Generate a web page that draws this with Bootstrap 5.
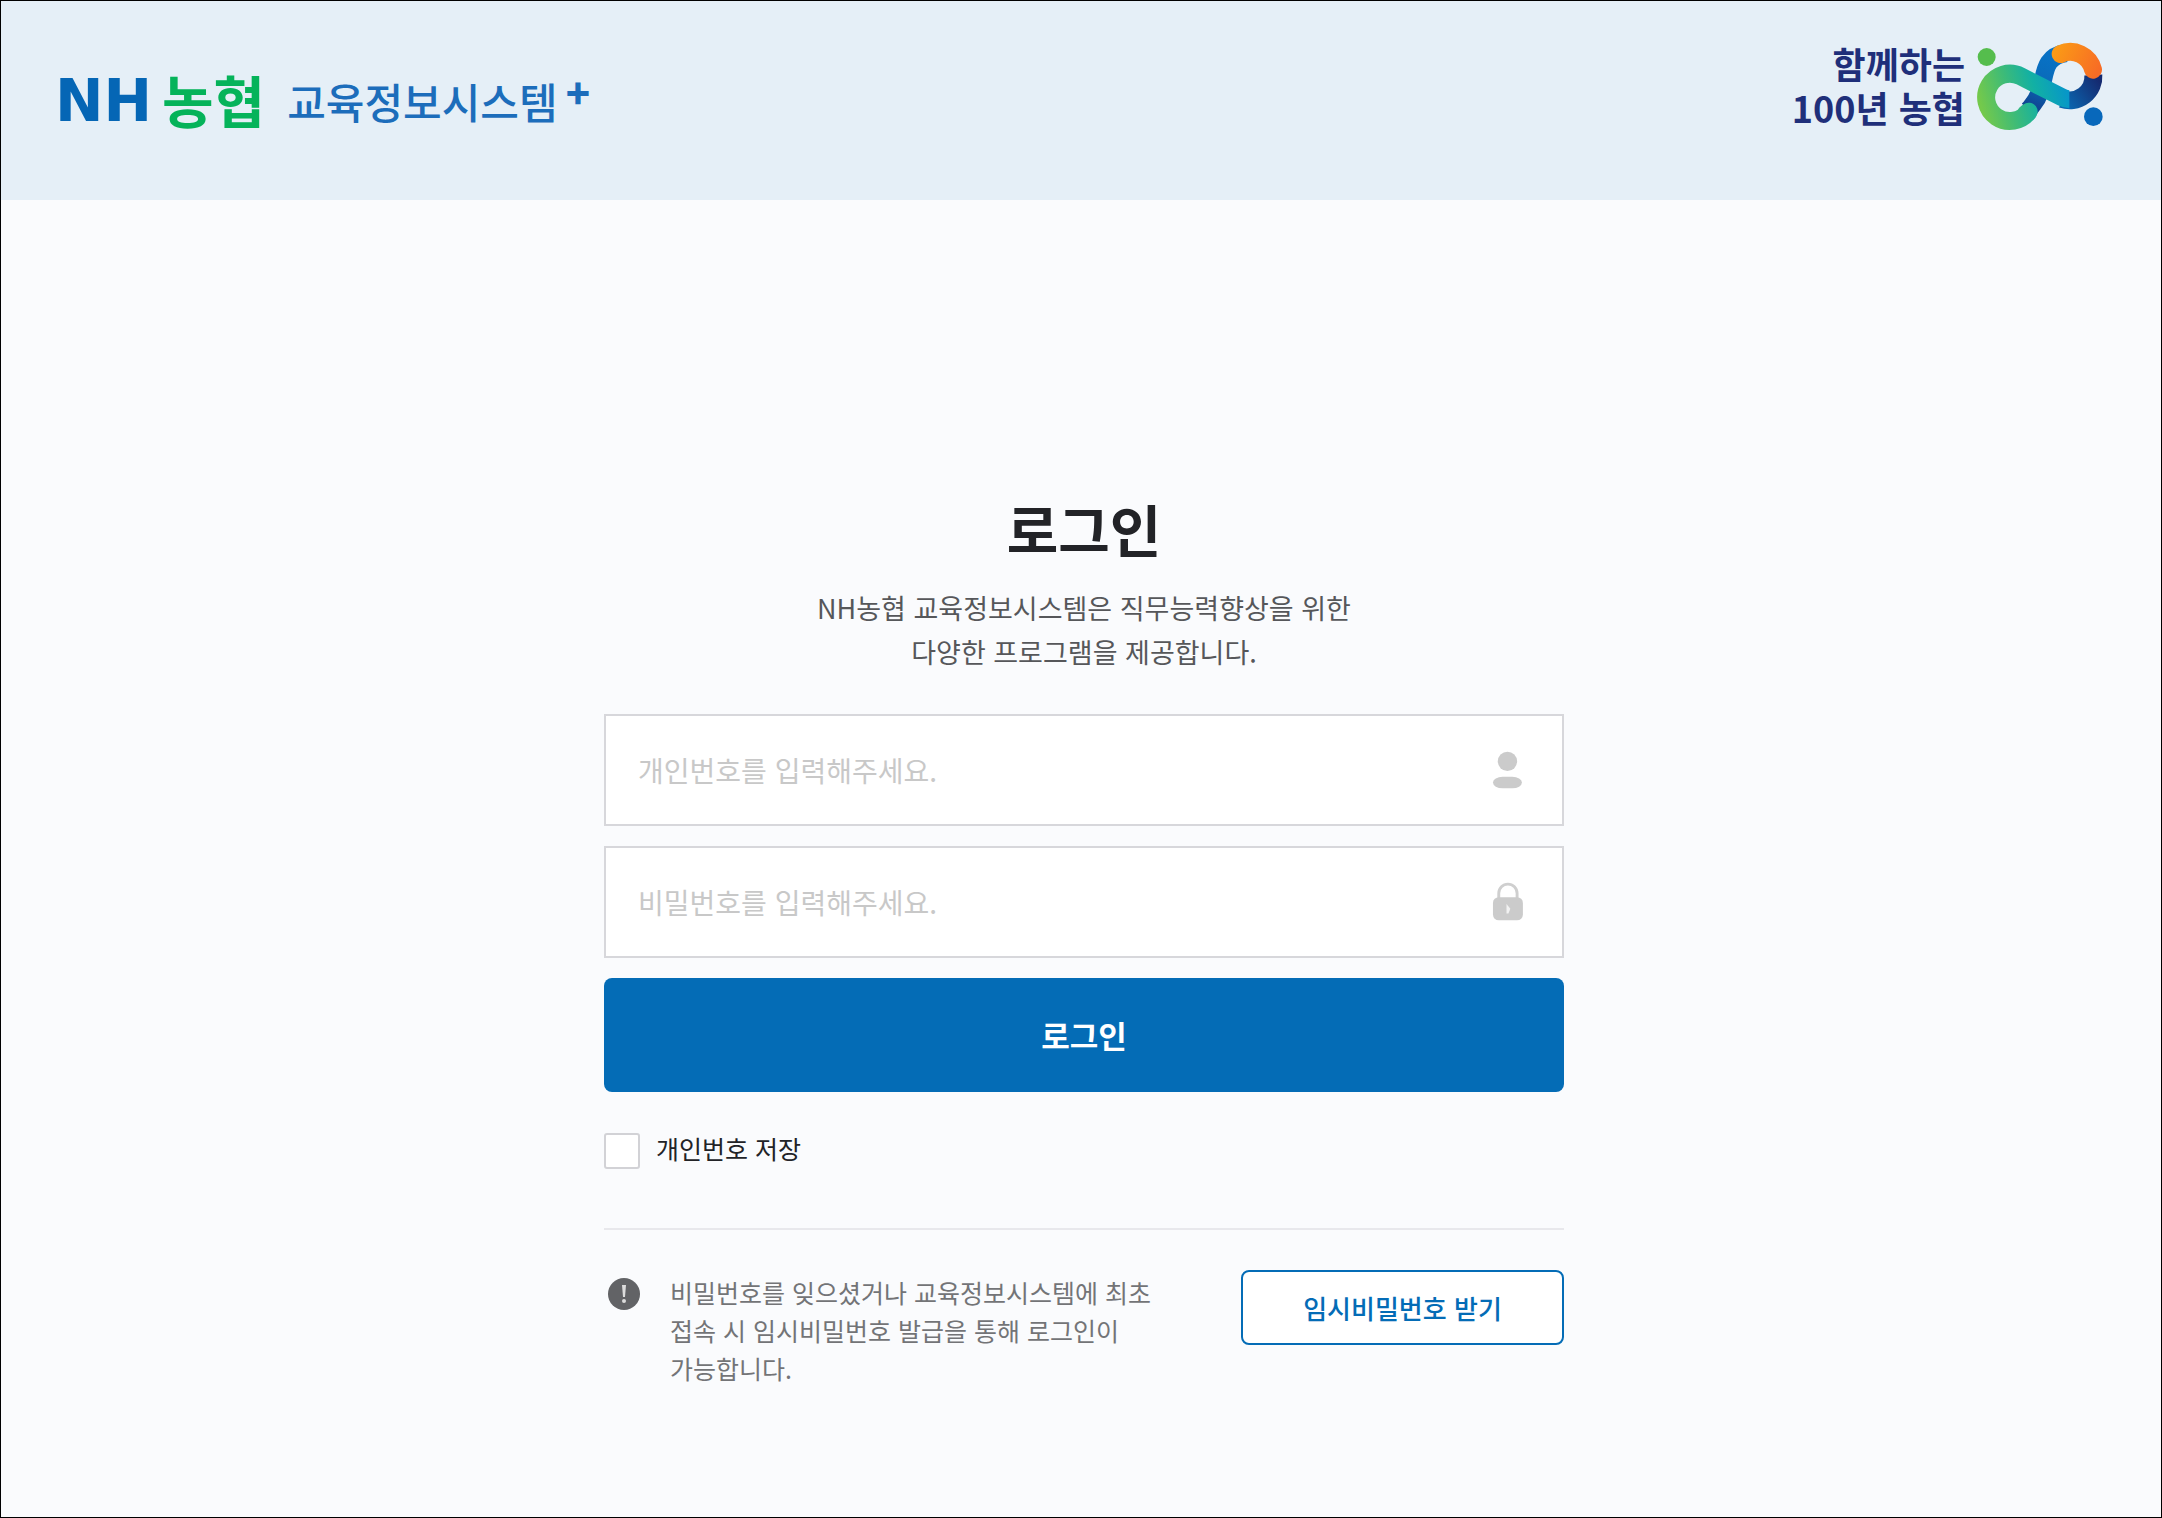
<!DOCTYPE html>
<html lang="ko">
<head>
<meta charset="utf-8">
<meta name="viewport" content="width=device-width, initial-scale=1">
<title>NH농협 교육정보시스템</title>
<link href="https://cdn.jsdelivr.net/npm/bootstrap@5.3.0/dist/css/bootstrap.min.css" rel="stylesheet">
<style>
body { font-family: "Noto Sans CJK KR", sans-serif; background: #fafbfd; color: #222327; border: 1px solid #000; }
.site-head { background: #e5eff7; height: 199px; padding: 40px 56px 0 54px; }
.brand { color: #1c6dbb; height: 120px; line-height: 120px; }
.brand-nh { font: bold 58px/120px "DejaVu Sans", sans-serif; color: #0566b5; }
.brand-coop { font-size: 56px; font-weight: 700; line-height: 116px; color: #05b35a; margin: 0 22px 0 10px; }
.brand-name { font-size: 42px; font-weight: 500; }
.brand-plus { font-size: 40px; font-weight: 900; line-height: 102px; margin-left: 8px; }
.slogan-row { gap: 10px; }
.slogan { font-size: 36px; font-weight: 700; line-height: 44px; color: #1f2f7a; }
.symbol { width: 130px; height: 90px; }
.login-main { padding: 288px 0 80px 6px; }
.login-box { max-width: 960px; }
.login-title { font-size: 56px; font-weight: 700; line-height: 80px; margin-bottom: 18px; }
.login-desc { font-size: 27px; line-height: 44px; color: #56575a; }
.field-stack { gap: 20px; }
.field { height: 112px; background: #fff; border: 2px solid #d7d7db; padding: 0 39px 0 32px; }
.field:focus-within { border-color: #046cb6; }
.field input { font-size: 28px; line-height: 48px; height: 56px; padding: 0; }
.field input::placeholder { color: #c8c8c8; }
.field svg { width: 32px; height: 44px; }
.btn-login { --bs-btn-bg: #046cb6; --bs-btn-hover-bg: #035c9b; --bs-btn-color: #fff; --bs-btn-hover-color: #fff; height: 114px; font-size: 31px; font-weight: 700; border: 0; border-radius: 8px; }
.save-row { padding: 41px 0 59px; line-height: 30px; font-size: 25px; }
.save-row .form-check-input { width: 36px; height: 36px; border: 2px solid #d2d2d6; border-radius: 3px; }
.help-row { border-top: 2px solid #e8e8ec; padding-top: 40px; }
.help-icon { width: 40px; height: 48px; }
.help-text { font-size: 25px; line-height: 38px; color: #737477; max-width: 500px; margin: 3px 0 0 26px; word-break: keep-all; }
.btn-temp { --bs-btn-color: #046cb6; --bs-btn-bg: #fff; --bs-btn-border-color: #046cb6; --bs-btn-hover-color: #fff; --bs-btn-hover-bg: #046cb6; width: 323px; height: 75px; border-width: 2px; border-radius: 8px; font-size: 26px; font-weight: 500; }
</style>
</head>
<body class="min-vh-100">
<header class="site-head d-flex justify-content-between align-items-start">
  <a href="#" class="brand d-flex text-decoration-none">
    <span class="brand-nh">NH</span><span class="brand-coop">농협</span><span class="brand-name">교육정보시스템</span><span class="brand-plus">+</span>
  </a>
  <div class="slogan-row d-flex">
    <div class="slogan text-end">함께하는<br>100년 농협</div>
    <svg class="symbol" viewBox="705 120 390 270" role="img" aria-label="100년 농협">
      <defs>
        <linearGradient id="ga" gradientUnits="userSpaceOnUse" x1="730" y1="340" x2="980" y2="270">
          <stop offset="0" stop-color="#74c94b"/><stop offset=".35" stop-color="#3dbb78"/><stop offset=".65" stop-color="#12b0a4"/><stop offset="1" stop-color="#0797c8"/>
        </linearGradient>
        <linearGradient id="gb" gradientUnits="userSpaceOnUse" x1="930" y1="170" x2="870" y2="320">
          <stop offset="0" stop-color="#0871c4"/><stop offset=".5" stop-color="#0a6ab9"/><stop offset="1" stop-color="#10428f"/>
        </linearGradient>
        <linearGradient id="gc" gradientUnits="userSpaceOnUse" x1="970" y1="300" x2="1070" y2="230">
          <stop offset="0" stop-color="#0a66b0"/><stop offset="1" stop-color="#152a70"/>
        </linearGradient>
        <linearGradient id="gd" gradientUnits="userSpaceOnUse" x1="940" y1="160" x2="1070" y2="220">
          <stop offset="0" stop-color="#fb9a16"/><stop offset="1" stop-color="#f76c25"/>
        </linearGradient>
      </defs>
      <g fill="none" stroke-width="54" stroke-linecap="round">
        <path d="M978 156C890 170 928 250 880 308Q870 323 862 329" stroke="url(#gb)" stroke-linecap="butt"/>
        <path d="M966 294A71 71 0 0 0 1060 222" stroke="url(#gc)" stroke-linecap="butt"/>
        <path d="M866 332A71 71 0 1 1 842 226L966 289Q978 295 988 295" stroke="url(#ga)" stroke-linecap="butt"/>
        <path d="M860 336A71 71 0 0 0 866 332" stroke="url(#ga)"/>
        <path d="M962 159A70 70 0 0 1 1059 206" stroke="url(#gd)"/>
      </g>
      <circle cx="740" cy="168" r="27" fill="#55bd4d"/>
      <circle cx="1060" cy="347" r="28" fill="#0868bb"/>
    </svg>
  </div>
</header>
<main class="login-main">
  <form class="login-box mx-auto">
    <h1 class="login-title text-center">로그인</h1>
    <p class="login-desc text-center mb-0 pb-3">NH농협 교육정보시스템은 직무능력향상을 위한<br>다양한 프로그램을 제공합니다.</p>
    <div class="field-stack d-grid mt-4">
      <label class="field d-flex align-items-center" for="userId">
        <input id="userId" type="text" aria-label="개인번호" class="form-control border-0 shadow-none bg-transparent" placeholder="개인번호를 입력해주세요.">
        <svg viewBox="0 0 32 44" fill="#cbcbcb" aria-hidden="true"><circle cx="16" cy="13" r="10"/><rect x="1" y="29" width="30" height="12" rx="10" ry="6"/></svg>
      </label>
      <label class="field d-flex align-items-center" for="userPw">
        <input id="userPw" type="password" aria-label="비밀번호" class="form-control border-0 shadow-none bg-transparent" placeholder="비밀번호를 입력해주세요.">
        <svg viewBox="0 0 32 44" aria-hidden="true"><path d="M7 20V13a9.500 9.500 0 0 1 19 0V20" fill="none" stroke="#cfcfcf" stroke-width="3"/><rect x="1" y="17" width="31" height="24" rx="6" fill="#cbcbcb"/><path d="M15 24l4 5-2 5h-2z" fill="#f2f2f2"/></svg>
      </label>
      <button type="submit" class="btn btn-login w-100">로그인</button>
    </div>
    <div class="save-row d-flex align-items-start">
      <input class="form-check-input m-0 flex-shrink-0" type="checkbox" id="saveId">
      <label for="saveId" class="ps-3">개인번호 저장</label>
    </div>
    <div class="help-row d-flex justify-content-between align-items-start">
      <div class="d-flex">
        <svg class="help-icon flex-shrink-0" viewBox="0 0 40 48" aria-hidden="true"><circle cx="20" cy="24" r="16" fill="#626366"/><path d="M18 15h4l-1 12h-2z" fill="#dcdcdc"/><circle cx="20" cy="31" r="2" fill="#dcdcdc"/></svg>
        <p class="help-text">비밀번호를 잊으셨거나 교육정보시스템에 최초 접속 시 임시비밀번호 발급을 통해 로그인이 가능합니다.</p>
      </div>
      <button type="button" class="btn btn-temp flex-shrink-0">임시비밀번호 받기</button>
    </div>
  </form>
</main>
<script src="https://cdn.jsdelivr.net/npm/bootstrap@5.3.0/dist/js/bootstrap.bundle.min.js"></script>
</body>
</html>
